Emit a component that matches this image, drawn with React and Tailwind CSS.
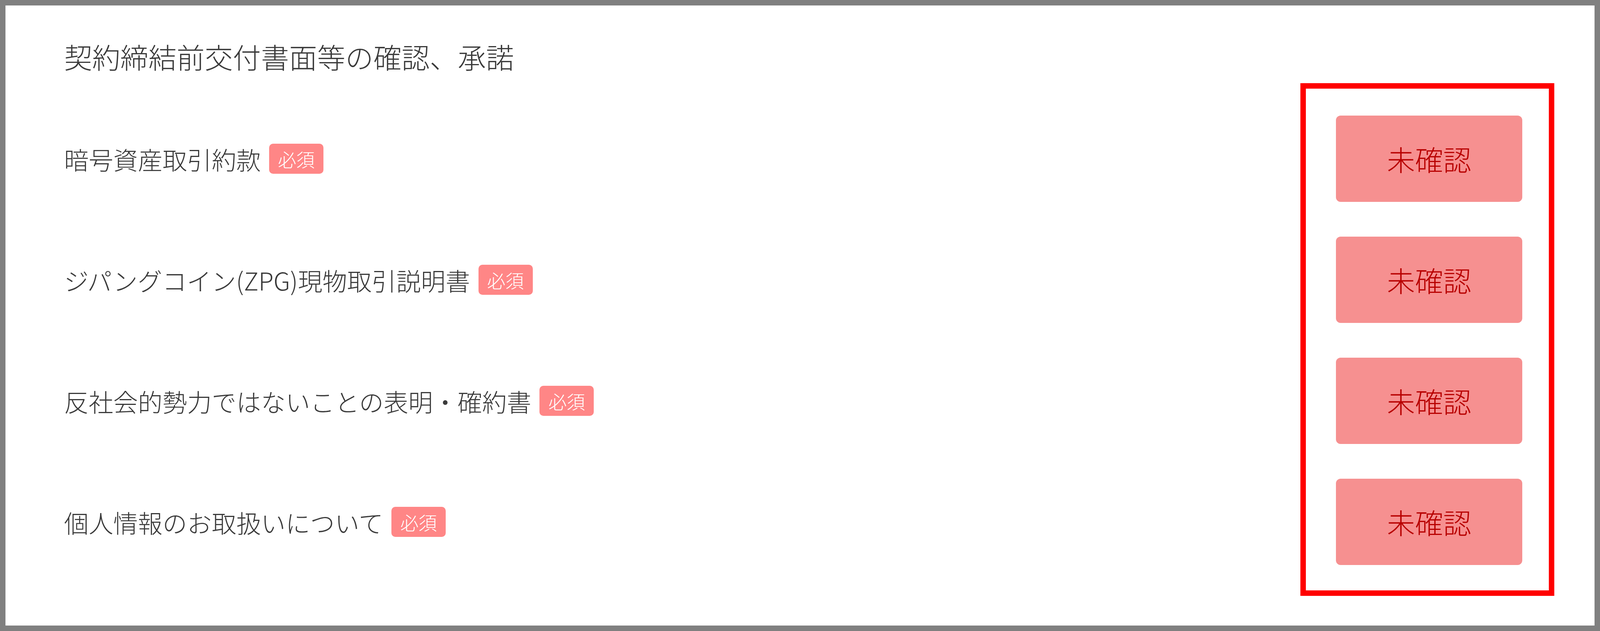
const items = [
  '暗号資産取引約款',
  'ジパングコイン(ZPG)現物取引説明書',
  '反社会的勢力ではないことの表明・確約書',
  '個人情報のお取扱いについて',
]

export default function App() {
  return (
    <div className="w-full h-[1616px] border-[14px] border-[#808080] bg-white font-['Noto_Sans_CJK_JP',sans-serif] font-light text-[#3a3a3a]">
      {/* heading */}
      <div className="h-[199px] pt-[93px] pl-[150px]">
        <h2 className="text-[72px] leading-[73px]">契約締結前交付書面等の確認、承諾</h2>
      </div>

      <div className="flex">
        {/* labels */}
        <div className="flex-1 pt-[38px] pl-[150px]">
          {items.map((label) => (
            <div key={label} className="h-[310px] flex items-center">
              <span className="text-[63px] leading-none">{label}</span>
              <span className="ml-[21px] w-[139px] h-[77px] rounded-[10px] bg-[#ff8686] text-white text-[47px] leading-none flex items-center justify-center">
                必須
              </span>
            </div>
          ))}
        </div>

        {/* status buttons (highlighted) */}
        <div className="w-[650px] h-[1313px] mr-[103px] border-[14px] border-[#ff0000] pt-[24px]">
          {items.map((label) => (
            <div key={label} className="h-[310px] flex items-center pl-[77px]">
              <button className="w-[477px] h-[221px] rounded-[12px] bg-[#f69090] text-[#b80000] text-[72px] leading-none flex items-center justify-center">
                未確認
              </button>
            </div>
          ))}
        </div>
      </div>
    </div>
  )
}
